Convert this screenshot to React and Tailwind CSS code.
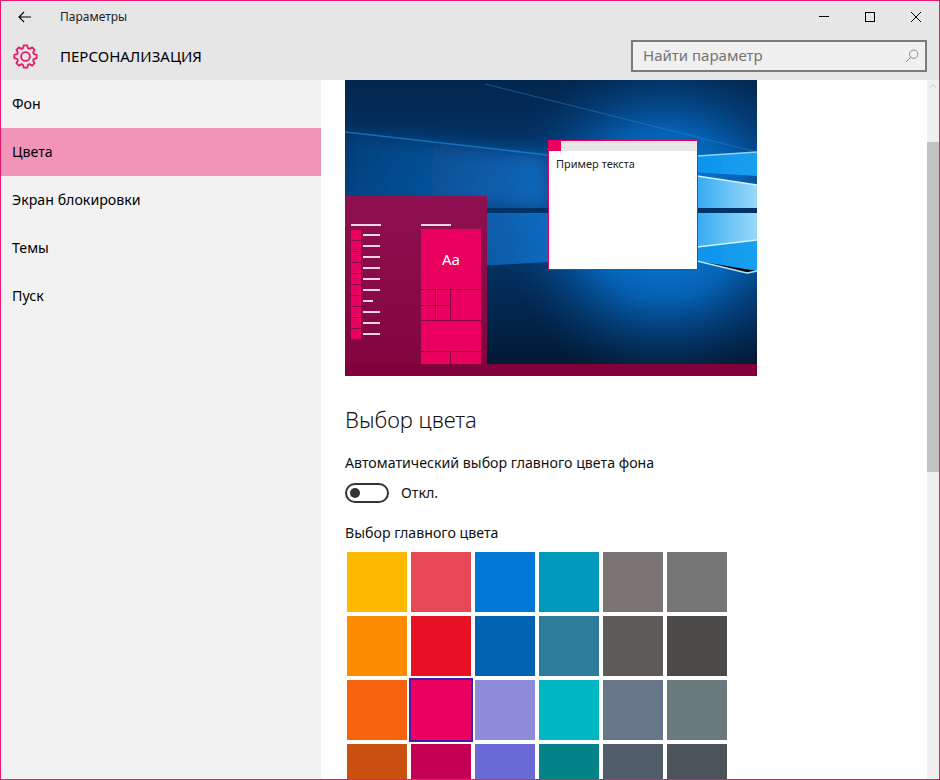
import React from 'react';
import { ChevronUp } from 'lucide-react';

const navItems = ['Фон', 'Цвета', 'Экран блокировки', 'Темы', 'Пуск'];

const swatches = [
    '#FFB900', '#E74856', '#0078D7', '#0099BC', '#7A7574', '#767676',
    '#FF8C00', '#E81123', '#0063B1', '#2D7D9A', '#5D5A58', '#4C4A48',
    '#F7630C', '#EA005E', '#8E8CD8', '#00B7C3', '#68768A', '#69797E',
    '#CA5010', '#C30052', '#6B69D6', '#038387', '#515C6B', '#4A5459',
];

const menuLines = [17, 17, 17, 17, 17, 17, 10, 17, 17, 17];

// 8 tooth gear outline, one tooth straight up
const gearPath = () => {
    const pts = [];
    for (let i = 0; i < 8; i++) {
        const a = (i * Math.PI) / 4;
        [[-0.3, 8.6], [-0.15, 11.3], [0.15, 11.3], [0.3, 8.6]].forEach(([da, r]) => {
            const t = a + da;
            pts.push(`${(12.5 + r * Math.cos(t)).toFixed(2)} ${(12.5 + r * Math.sin(t)).toFixed(2)}`);
        });
    }
    return 'M' + pts.join('L') + 'Z';
};

const GearIcon = () => (
    <svg width="25" height="25" viewBox="0 0 25 25" fill="none" stroke="#EA1A6B" strokeWidth="1.8" strokeLinejoin="round">
        <path d={gearPath()} />
        <circle cx="12.5" cy="12.5" r="4.4" />
    </svg>
);

const SearchIcon = () => (
    <svg width="14" height="14" viewBox="0 0 14 14" fill="none" stroke="#8f8f8f" strokeWidth="1">
        <circle cx="8.7" cy="5.2" r="4.2" />
        <path d="M5.8 8.2L1 13" />
    </svg>
);

const BackArrow = () => (
    <svg width="14" height="12" viewBox="0 0 14 12" fill="none" stroke="#000" strokeWidth="1.1">
        <path d="M1 6H13M6 1L1 6L6 11" />
    </svg>
);

const WindowButtons = () => (
    <div className="ml-auto flex">
        <div className="w-[46px] h-[31px] flex items-center justify-center">
            <div className="w-[10px] h-[1px] bg-black" />
        </div>
        <div className="w-[46px] h-[31px] flex items-center justify-center">
            <div className="w-[10px] h-[10px] border border-black" />
        </div>
        <div className="w-[46px] h-[31px] flex items-center justify-center">
            <svg width="10" height="10" viewBox="0 0 10 10" fill="none" stroke="#000" strokeWidth="1">
                <path d="M0 0L10 10M10 0L0 10" />
            </svg>
        </div>
    </div>
);

const Wallpaper = () => (
    <svg className="absolute inset-0" width="412" height="296" viewBox="0 0 412 296">
        <defs>
            <linearGradient id="base" x1="0" y1="0" x2="0" y2="1">
                <stop offset="0" stopColor="#02264e" />
                <stop offset="0.45" stopColor="#043d78" />
                <stop offset="0.8" stopColor="#02244a" />
                <stop offset="1" stopColor="#011830" />
            </linearGradient>
            <radialGradient id="glow" gradientUnits="userSpaceOnUse" cx="320" cy="135" r="170">
                <stop offset="0" stopColor="#0a90f0" />
                <stop offset="0.5" stopColor="#0668c0" stopOpacity="0.85" />
                <stop offset="1" stopColor="#03386f" stopOpacity="0" />
            </radialGradient>
            <linearGradient id="paneLeft" gradientUnits="userSpaceOnUse" x1="0" y1="0" x2="210" y2="0">
                <stop offset="0" stopColor="#0a5aa8" stopOpacity="0.35" />
                <stop offset="1" stopColor="#0d70c8" stopOpacity="0.9" />
            </linearGradient>
            <linearGradient id="paneBright" gradientUnits="userSpaceOnUse" x1="345" y1="0" x2="412" y2="0">
                <stop offset="0" stopColor="#2aa6f2" />
                <stop offset="1" stopColor="#9ad9f8" />
            </linearGradient>
            <linearGradient id="paneDeep" gradientUnits="userSpaceOnUse" x1="345" y1="0" x2="412" y2="0">
                <stop offset="0" stopColor="#0a92ec" />
                <stop offset="1" stopColor="#1aa0f0" />
            </linearGradient>
            <filter id="soft"><feGaussianBlur stdDeviation="0.7" /></filter>
            <filter id="wide"><feGaussianBlur stdDeviation="9" /></filter>
        </defs>
        <rect width="412" height="296" fill="url(#base)" />
        <rect width="412" height="296" fill="url(#glow)" />
        <path d="M0 52L203 75L203 128L0 128Z" fill="url(#paneLeft)" filter="url(#wide)" />
        <path d="M0 133L203 133L203 182L0 194Z" fill="url(#paneLeft)" filter="url(#soft)" />
        <path d="M345 76L412 72L412 96L345 92Z" fill="url(#paneDeep)" filter="url(#soft)" />
        <path d="M345 95L412 105L412 128L345 128Z" fill="url(#paneBright)" filter="url(#soft)" />
        <path d="M345 133L412 133L412 160L345 168Z" fill="url(#paneBright)" filter="url(#soft)" />
        <path d="M345 168L412 160L412 191L402 193L345 180Z" fill="url(#paneDeep)" filter="url(#soft)" />
        <rect x="0" y="128" width="412" height="5" fill="#043066" filter="url(#soft)" />
        <path d="M0 52L203 75" stroke="#1b80d2" strokeWidth="1.6" opacity="0.75" filter="url(#soft)" />
        <path d="M140 4L412 72" stroke="#2a8cd8" strokeWidth="1.2" opacity="0.45" filter="url(#soft)" />
        <path d="M352 76L412 72" stroke="#b4e6fb" strokeWidth="1.4" opacity="0.8" filter="url(#soft)" />
        <path d="M352 96L412 105" stroke="#d4f1fd" strokeWidth="1.6" filter="url(#soft)" />
        <path d="M352 167L412 160" stroke="#d4f1fd" strokeWidth="1.6" filter="url(#soft)" />
        <path d="M352 181L402 193L412 191" stroke="#b4e6fb" strokeWidth="1.4" filter="url(#soft)" />
    </svg>
);

const StartMenu = () => (
    <div className="absolute left-0 bottom-0 w-[142px] h-[168px] bg-linear-to-b from-[#8f1050] to-[#83053f] flex pt-[28px] pl-[6px]">
        <div className="w-[30px] flex flex-col">
            <div className="h-[2px] bg-[#ead7e0]" />
            <div className="mt-[3px] flex flex-col">
                {menuLines.map((w, i) => (
                    <div key={i} className="h-[11px] flex items-center gap-[2px] w-[30px]">
                        <div className="w-[10px] h-[10px] bg-[#EA005E] shrink-0" />
                        <div className="h-[2px] bg-[#ead7e0]" style={{ width: w }} />
                    </div>
                ))}
            </div>
        </div>
        <div className="w-[60px] ml-[40px] flex flex-col">
            <div className="w-[30px] h-[2px] bg-[#ead7e0]" />
            <div className="mt-[3px] flex flex-col gap-[1px]">
                <div className="h-[60px] bg-[#EA005E] flex items-center justify-center text-white text-[15px] leading-none">Aa</div>
                <div className="grid grid-cols-[14px_14px_30px] grid-rows-[15px_14px] gap-[1px] mt-[-1px] pt-[1px]">
                    <div className="bg-[#EA005E]" />
                    <div className="bg-[#EA005E]" />
                    <div className="bg-[#EA005E] row-span-2" />
                    <div className="bg-[#EA005E]" />
                    <div className="bg-[#EA005E]" />
                </div>
                <div className="h-[30px] bg-[#EA005E]" />
                <div className="h-[12px] flex gap-[1px]">
                    <div className="w-[29px] bg-[#EA005E]" />
                    <div className="flex-1 bg-[#EA005E]" />
                </div>
            </div>
        </div>
    </div>
);

const Preview = () => (
    <div className="w-[412px] h-[296px] shrink-0 flex flex-col">
        <div className="relative h-[284px] overflow-hidden">
            <Wallpaper />
            <StartMenu />
            <div className="absolute left-[203px] top-[60px] w-[150px] h-[130px] border border-[#EA005E] bg-white">
                <div className="h-[10px] bg-[#e6e6e6]">
                    <div className="w-[12px] h-[10px] bg-[#EA005E]" />
                </div>
                <div className="pl-[7px] pt-[5px] text-[11px] leading-[16px] text-[#222]">Пример текста</div>
            </div>
        </div>
        <div className="h-[12px] bg-[#80003a]" />
    </div>
);

export default function App() {
    return (
        <div className="w-[940px] h-[780px] border border-[#E9196F] bg-white flex flex-col overflow-hidden text-black font-['Noto_Sans',sans-serif]">
            <div className="bg-[#e6e6e6] h-[79px] shrink-0 flex flex-col">
                <div className="h-[31px] flex items-center">
                    <div className="ml-[17px]"><BackArrow /></div>
                    <span className="ml-[28px] text-[12px] text-[#222]">Параметры</span>
                    <WindowButtons />
                </div>
                <div className="flex-1 flex items-center pl-[12px] pr-[12px]">
                    <GearIcon />
                    <span className="ml-[22px] text-[15px]">ПЕРСОНАЛИЗАЦИЯ</span>
                    <div className="ml-auto w-[296px] h-[32px] mt-[-1px] border-2 border-[#7a7a7a] bg-[#f0f0f0] flex items-center justify-between pl-[10px] pr-[6px]">
                        <span className="text-[15px] text-[#757575]">Найти параметр</span>
                        <SearchIcon />
                    </div>
                </div>
            </div>
            <div className="flex-1 flex min-h-0">
                <nav className="w-[320px] shrink-0 bg-[#f2f2f2] flex flex-col">
                    {navItems.map((item) => (
                        <div key={item} className={`h-[48px] flex items-center pl-[11px] text-[14.2px] ${item === 'Цвета' ? 'bg-[#F294B8]' : ''}`}>
                            {item}
                        </div>
                    ))}
                </nav>
                <main className="flex-1 pl-[24px] flex flex-col overflow-hidden">
                    <Preview />
                    <h2 className="mt-[28px] text-[22px] leading-[30px] font-light text-[#111]">Выбор цвета</h2>
                    <p className="mt-[19px] text-[14.2px] leading-[20px] text-[#111]">Автоматический выбор главного цвета фона</p>
                    <div className="mt-[9px] flex items-center gap-[12px]">
                        <div className="w-[44px] h-[20px] rounded-full border-2 border-[#333] flex items-center pl-[3px]">
                            <div className="w-[10px] h-[10px] rounded-full bg-[#333]" />
                        </div>
                        <span className="text-[14.2px] text-[#111]">Откл.</span>
                    </div>
                    <p className="mt-[20px] text-[14.2px] leading-[20px] text-[#111]">Выбор главного цвета</p>
                    <div className="mt-[9px] ml-[2px] grid grid-cols-[repeat(6,60px)] auto-rows-[60px] gap-[4px]">
                        {swatches.map((c) => (
                            <div
                                key={c}
                                className={c === '#EA005E' ? 'outline-2 outline-[#4B17B0]' : ''}
                                style={{ backgroundColor: c }}
                            />
                        ))}
                    </div>
                </main>
                <aside className="w-[12px] shrink-0 bg-[#f0f0f0] flex flex-col items-center">
                    <ChevronUp size={12} strokeWidth={2} className="text-[#c4c4c4]" />
                    <div className="w-full h-[330px] mt-[50px] bg-[#c2c2c2]" />
                </aside>
            </div>
        </div>
    );
}
